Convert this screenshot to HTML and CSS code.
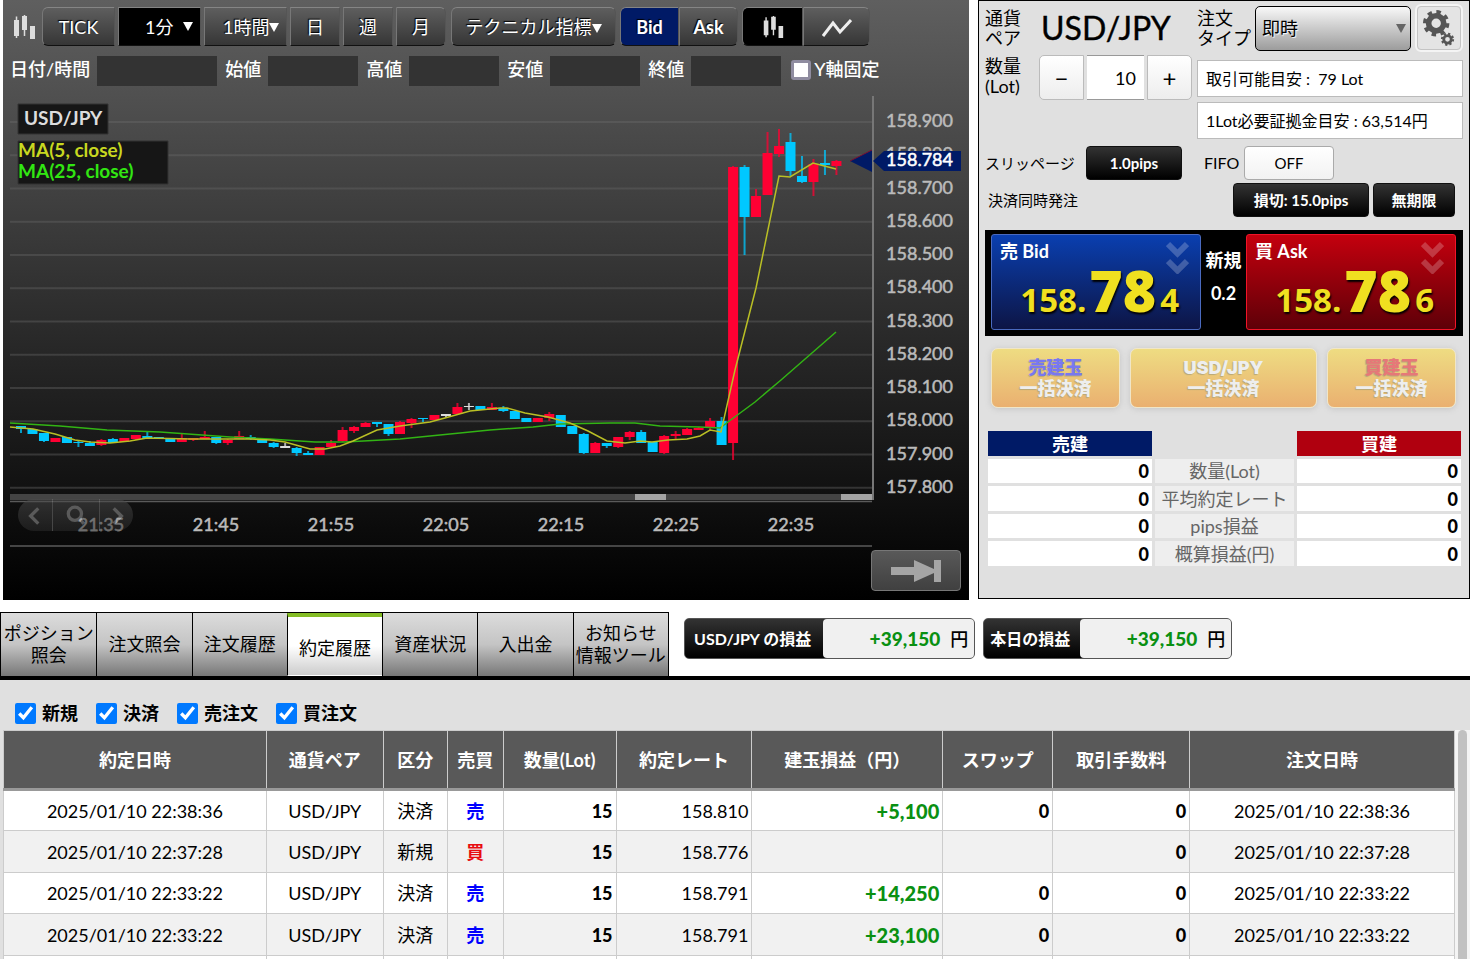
FILE: index.html
```html
<!DOCTYPE html>
<html lang="ja">
<head>
<meta charset="utf-8">
<title>USD/JPY</title>
<link rel="stylesheet" href="styles.css">
</head>
<body>
<svg class="defs" aria-hidden="true">
  <symbol id="candles" viewBox="0 0 22 26">
    <path d="M3.500 2.500V24M11.500 1V22" stroke="currentColor" stroke-width="1.500"/>
    <path d="M1 6h5v16H1zM9 2h5v14H9zM17 12h5v13h-5z" fill="currentColor"/>
  </symbol>
  <symbol id="down" viewBox="0 0 10 9"><path d="M0 0H10L5 9z" fill="currentColor"/></symbol>
  <symbol id="chevrons" viewBox="0 0 23 33">
    <path d="M2 3 11.500 12.500 21 3M2 20 11.500 29.500 21 20" fill="none" stroke="currentColor" stroke-width="6"/>
  </symbol>
</svg>

<main class="workspace">
  <section class="chart-panel">
    <div class="toolbar">
      <svg class="candle-icon"><use href="#candles"/></svg>
      <button class="tool first tick">TICK</button>
      <span class="picker minutes on"><select class="tool square" aria-label="分足"><option>1分</option></select><svg><use href="#down"/></svg></span>
      <span class="picker hours"><select class="tool square" aria-label="時間足"><option>1時間</option></select><svg><use href="#down"/></svg></span>
      <button class="tool square day">日</button>
      <button class="tool square day">週</button>
      <button class="tool last day">月</button>
      <button class="tool indicators">テクニカル指標<svg><use href="#down"/></svg></button>
      <div class="pair price-side"><button class="tool first bid-on">Bid</button><button class="tool last">Ask</button></div>
      <div class="pair chart-type">
        <button class="tool first black" aria-label="ローソク足"><svg class="candle-icon"><use href="#candles"/></svg></button>
        <button class="tool last" aria-label="ライン"><svg class="line-icon" viewBox="0 0 30 20"><path d="M1 18 11 5 18 14 29 2" fill="none" stroke="currentColor" stroke-width="3"/></svg></button>
      </div>
    </div>
    <div class="ohlc">
      <label for="dt">日付/時間</label><input id="dt" class="date-box" readonly>
      <label for="op">始値</label><input id="op" readonly>
      <label for="hi">高値</label><input id="hi" readonly>
      <label for="lo">安値</label><input id="lo" readonly>
      <label for="cl">終値</label><input id="cl" readonly>
      <label class="fix"><input type="checkbox" class="fix-box">Y軸固定</label>
    </div>
    <div class="chart">
      <svg class="plot" id="plot" viewBox="3 90 966 510" role="img" aria-label="USD/JPY 1分足">
        <g id="grid"></g>
        <path d="M873 96V500" class="axis"/>
        <path d="M10 497H872" stroke="#444" stroke-width="6"/>
        <path d="M635 497H666M841 497H872" stroke="#a3a3a3" stroke-width="6"/>
        <path d="M10 501.500H872M10 546H872" stroke="#5a5a5a" stroke-width="1.500"/>
        <g id="candle-layer"></g>
        <polyline class="ma25" points="10,423 60,426 107,430 160,432 230,437 270,439 315,442 345,442 400,439 450,434 490,430 533,427 560,424 610,423 635,423 660,426 700,427 720,428 732,419 755,402 781,380 836,332"/>
        <polyline class="ma5" points="10,427 33,429 55,434 75,440 90,442 110,443 130,441 147,438 190,439 250,439 270,440 285,442 310,449 325,449 340,446 353,441 377,430 400,426 430,422 445,418 470,411 500,408 507,408 525,413 548,417 570,423 588,431 607,441 625,443 640,441 652,442 668,440 687,439 700,436 710,430 721,432 735,370 756,288 779,176 790,177 813,163 836,169"/>
        <g id="labels"></g>
        <path d="M850 161 872 150V172z" fill="#001a66"/>
        <path d="M850 161 872 150" stroke="#7a1030"/>
        <path d="M873 161 884 151H961V171H884z" fill="#001a66"/>
        <text x="953" y="166" class="tag">158.784</text>
        <path d="M18 104H108V134H18zM18 141H168V184H18z" fill="#161616" stroke="#333"/>
        <text x="24" y="125" class="legend" fill="#ddd">USD/JPY</text>
        <text x="18" y="157" class="legend" fill="#c8d820">MA(5, close)</text>
        <text x="18" y="178" class="legend" fill="#32e612">MA(25, close)</text>
      </svg>
      <div class="nav">
        <button aria-label="前へ"><svg viewBox="0 0 20 20"><path d="M13 3 6 10 13 17"/></svg></button>
        <button aria-label="ズーム"><svg viewBox="0 0 20 20"><circle cx="9" cy="8" r="6"/><path d="M13 12 17 17"/></svg></button>
        <button aria-label="次へ"><svg viewBox="0 0 20 20"><path d="M7 3 14 10 7 17"/></svg></button>
      </div>
      <button class="latest" aria-label="最新へ"><svg viewBox="0 0 52 22"><path d="M1 7H24V0L44 9V0H51V22H44V13L24 22V15H1z"/></svg></button>
    </div>
  </section>

  <section class="order-panel">
    <div class="order-grid">
      <div class="order-left">
        <div class="line pair-line"><span class="caption">通貨<br>ペア</span><span class="symbol">USD/JPY</span></div>
        <div class="line"><label class="caption" for="lot">数量<br>(Lot)</label>
          <div class="stepper"><button class="step minus" aria-label="減らす">−</button><input id="lot" value="10"><button class="step plus" aria-label="増やす">+</button></div></div>
      </div>
      <div class="order-right">
        <div class="line type-line"><label class="caption" for="type">注文<br>タイプ</label>
          <span class="picker type"><select id="type"><option>即時</option></select><svg><use href="#down"/></svg></span>
          <button class="gear" aria-label="設定"><svg viewBox="0 0 36 40">
            <g fill="none" stroke="#555"><circle cx="15" cy="15" r="8" stroke-width="6"/><circle cx="15" cy="15" r="12" stroke-width="4" stroke-dasharray="4.700 4.700"/>
            <circle cx="27" cy="32" r="4" stroke-width="3"/><circle cx="27" cy="32" r="6" stroke-width="2" stroke-dasharray="2.350 2.350"/></g></svg></button></div>
        <div class="info">取引可能目安 :&nbsp; 79 Lot</div>
        <div class="info">1Lot必要証拠金目安 : 63,514円</div>
      </div>
    </div>
    <div class="settings">
      <span class="small slip">スリッページ</span><button class="dark slip-btn">1.0pips</button>
      <span class="small fifo">FIFO</span><button class="light">OFF</button>
    </div>
    <div class="settings settle">
      <span class="small">決済同時発注</span><button class="dark stop">損切: 15.0pips</button><button class="dark limit">無期限</button>
    </div>
    <div class="rates">
      <button class="rate sell"><span class="side">売 Bid</span><svg><use href="#chevrons"/></svg><span class="price">158.<b>78</b><i>4</i></span></button>
      <div class="spread"><span>新規</span><span>0.2</span></div>
      <button class="rate buy"><span class="side">買 Ask</span><svg><use href="#chevrons"/></svg><span class="price">158.<b>78</b><i>6</i></span></button>
    </div>
    <div class="close-all">
      <button><span class="c-sell">売建玉</span>一括決済</button>
      <button><span class="c-pair">USD/JPY</span>一括決済</button>
      <button><span class="c-buy">買建玉</span>一括決済</button>
    </div>
    <table class="summary">
      <tr><th class="h-sell">売建</th><td class="blank"></td><th class="h-buy">買建</th></tr>
      <tr><td>0</td><th>数量(Lot)</th><td>0</td></tr>
      <tr><td>0</td><th>平均約定レート</th><td>0</td></tr>
      <tr><td>0</td><th>pips損益</th><td>0</td></tr>
      <tr><td>0</td><th>概算損益(円)</th><td>0</td></tr>
    </table>
  </section>
</main>

<div class="tabbar">
  <nav class="tabs">
    <button>ポジション<br>照会</button><button>注文照会</button><button>注文履歴</button><button class="current">約定履歴</button><button>資産状況</button><button>入出金</button><button>お知らせ<br>情報ツール</button>
  </nav>
  <div class="pl pl-pair"><span class="pl-name">USD/JPY の損益</span><span class="pl-value"><b>+39,150</b>円</span></div>
  <div class="pl"><span class="pl-name">本日の損益</span><span class="pl-value"><b>+39,150</b>円</span></div>
</div>

<section class="history">
  <div class="filters">
    <label><input type="checkbox" checked>新規</label><label><input type="checkbox" checked>決済</label><label><input type="checkbox" checked>売注文</label><label><input type="checkbox" checked>買注文</label>
  </div>
  <div class="history-body">
    <table class="trades">
      <colgroup><col class="w-date"><col class="w-pair"><col class="w-kind"><col class="w-side"><col class="w-lot"><col class="w-rate"><col class="w-pl"><col class="w-swap"><col class="w-fee"><col class="w-order"></colgroup>
      <thead><tr><th>約定日時</th><th>通貨ペア</th><th>区分</th><th>売買</th><th>数量(Lot)</th><th>約定レート</th><th>建玉損益（円）</th><th>スワップ</th><th>取引手数料</th><th>注文日時</th></tr></thead>
      <tbody>
        <tr><td>2025/01/10 22:38:36</td><td>USD/JPY</td><td>決済</td><td class="s">売</td><td class="n">15</td><td class="r">158.810</td><td class="g">+5,100</td><td class="n">0</td><td class="n">0</td><td>2025/01/10 22:38:36</td></tr>
        <tr><td>2025/01/10 22:37:28</td><td>USD/JPY</td><td>新規</td><td class="b">買</td><td class="n">15</td><td class="r">158.776</td><td></td><td></td><td class="n">0</td><td>2025/01/10 22:37:28</td></tr>
        <tr><td>2025/01/10 22:33:22</td><td>USD/JPY</td><td>決済</td><td class="s">売</td><td class="n">15</td><td class="r">158.791</td><td class="g">+14,250</td><td class="n">0</td><td class="n">0</td><td>2025/01/10 22:33:22</td></tr>
        <tr><td>2025/01/10 22:33:22</td><td>USD/JPY</td><td>決済</td><td class="s">売</td><td class="n">15</td><td class="r">158.791</td><td class="g">+23,100</td><td class="n">0</td><td class="n">0</td><td>2025/01/10 22:33:22</td></tr>
        <tr><td></td><td></td><td></td><td></td><td></td><td></td><td></td><td></td><td></td><td></td></tr>
      </tbody>
    </table>
    <div class="track"><div class="thumb"></div></div>
  </div>
</section>
<script src="chart.js"></script>
</body>
</html>
```
FILE: styles.css
```css
* { box-sizing: border-box; }
body {
  margin: 0; height: 100vh; display: flex; flex-direction: column; overflow: hidden;
  background: #fff; color: #000;
  font: 18px/20px Lato, "Noto Sans CJK JP", sans-serif;
}
button, input, select { font: inherit; color: inherit; margin: 0; padding: 0; }
button { white-space: nowrap; }
.defs { position: absolute; width: 0; height: 0; }

.workspace { display: grid; grid-template-columns: 966fr 492fr; gap: 9px; padding: 0 0 0 3px; flex: none; }

/* chart */
.chart-panel { background: linear-gradient(#5f5f5f, #2f2f2f 50%, #000); color: #fff; min-width: 0; }
.toolbar { display: flex; align-items: center; height: 53px; padding: 0 0 0 10px; gap: 3px; }
.candle-icon { width: 22px; height: 26px; color: #ddd; }
.toolbar > .candle-icon { margin-right: 4px; }
.tool {
  height: 39px; border: 1px solid #777; border-color: #858585 #555 #111 #777;
  background: linear-gradient(#5e5e5e, #363636); color: #fff; text-shadow: -1px -1px 1px #000;
}
.first { border-radius: 6px 0 0 6px; }
.last { border-radius: 0 6px 6px 0; }
.square { border-radius: 0; }
.tick { width: 73px; }
.day { width: 50px; }
.picker { position: relative; display: inline-flex; }
.picker select { appearance: none; width: 100%; text-align: left; }
.picker svg { position: absolute; width: 10px; height: 9px; pointer-events: none; }
.minutes, .hours { width: 83px; }
.minutes select { padding-left: 26px; background: #000; }
.hours select { padding-left: 18px; }
.minutes svg { right: 8px; top: 15px; }
.hours svg { right: 8px; top: 16px; }
.indicators { width: 165px; border-radius: 6px; margin-left: 2px; }
.indicators svg { width: 10px; height: 9px; vertical-align: 1px; }
.pair { display: flex; margin-left: 1px; }
.price-side .tool { width: 59px; font-weight: 700; }
.price-side .tool.bid-on { background: #001a66; }
.chart-type .tool { width: 67px; }
.chart-type .tool.black { width: 61px; background: #000; }
.chart-type .candle-icon { width: 22px; height: 24px; vertical-align: middle; }
.line-icon { width: 30px; height: 20px; vertical-align: middle; color: #eee; }
.ohlc { display: flex; align-items: center; height: 37px; padding: 0 0 6px 7px; gap: 7px; font-weight: 500; white-space: nowrap; }
.ohlc input { width: 90px; height: 30px; border: 0; background: #333; margin: 4px 1px 0 0; flex: none; }
.ohlc .date-box { width: 120px; }
.ohlc .fix { display: flex; gap: 3px; margin-left: 2px; align-items: center; }
.ohlc .fix-box { appearance: none; width: 20px; height: 20px; margin: 2px 0 0; border: 3px solid #8f8ca0; border-radius: 3px; background: #fff; }
.chart { position: relative; }
.plot { display: block; width: 100%; height: auto; }
.plot text { font-size: 18px; }
.axis { stroke: #777; stroke-width: 2; }
.ma5, .ma25 { fill: none; stroke-width: 1.5; stroke: #b9bf25; }
.ma25 { stroke: #32b414; }
.scale { fill: #bbb; stroke: #bbb; stroke-width: 0.5px; }
.tag { fill: #fff; stroke: #fff; stroke-width: 0.5px; text-anchor: end; }
.plot .legend { font-size: 19px; font-weight: 700; }
.nav { position: absolute; left: 15px; bottom: 69px; display: flex; border-radius: 16px; overflow: hidden; opacity: 0.55; }
.nav button { width: 34px; height: 32px; border: 0; background: linear-gradient(#4c4c4c, #2c2c2c); }
.nav button + button { width: 47px; border-left: 1px solid #777; }
.nav button:last-child { width: 34px; }
.nav svg { width: 22px; height: 22px; fill: none; stroke: #999; stroke-width: 3; vertical-align: middle; }
.latest { position: absolute; right: 8px; bottom: 9px; width: 90px; height: 41px; border: 1px solid #777; border-radius: 4px; background: linear-gradient(#595959, #404040); }
.latest svg { width: 52px; height: 22px; fill: #a5a5a5; vertical-align: middle; }

/* order entry */
.order-panel { border: 1px solid #000; background: #e0e0e0; padding: 3px 6px 0 6px; min-width: 0; margin-bottom: 1px; }
.order-grid { display: grid; grid-template-columns: 212fr 266fr; }
.line { display: flex; align-items: center; }
.caption { line-height: 20px; width: 54px; white-space: nowrap; }
.pair-line { height: 48px; }
.symbol { font-size: 32px; line-height: 48px; padding-left: 2px; -webkit-text-stroke: 0.4px #000; }
.stepper { display: flex; gap: 3px; margin-top: 3px; }
.step { width: 45px; height: 45px; border: 1px solid #bbb; background: linear-gradient(#fff, #ededed); font-size: 24px; }
.minus { border-radius: 5px 0 0 5px; }
.plus { border-radius: 0 5px 5px 0; }
.stepper input { width: 57px; border: solid #999; border-width: 1px 0; background: #fff; text-align: right; padding-right: 8px; }
.type-line { height: 48px; gap: 4px; margin-bottom: 8px; }
.picker.type { flex: 1; }
.type select { height: 45px; padding-left: 6px; border: 1px solid #000; border-radius: 5px; background: linear-gradient(#f8f8f8, #9c9c9c); text-shadow: 1px 1px 1px #fff; }
.type svg { right: 5px; top: 18px; color: #666; }
.gear { width: 48px; height: 48px; border: 2px solid #f4f4f4; outline: 1px solid #c4c4c4; outline-offset: -3px; border-radius: 6px; background: #e4e4e4; }
.gear svg { width: 34px; height: 38px; vertical-align: middle; }
.info { height: 37px; border: 1px solid #bbb; background: #fff; margin-bottom: 5px; padding: 0 8px; font-size: 16px; line-height: 36px; white-space: nowrap; }
.settings { display: flex; align-items: center; height: 38px; white-space: nowrap; }
.small { font-size: 15px; }
.slip { width: 101px; }
.fifo { width: 40px; font-size: 16px; margin-left: 22px; }
.dark, .light { height: 34px; border-radius: 4px; font-size: 15px; border: 1px solid #111; }
.dark { background: linear-gradient(#333, #000); color: #fff; font-weight: 700; }
.light { width: 90px; border-color: #aaa; background: linear-gradient(#fff, #f2f2f2); }
.slip-btn { width: 96px; }
.settle { height: 36px; padding: 0 8px 0 3px; }
.stop { width: 136px; margin: 0 4px 0 auto; }
.limit { width: 82px; }
.rates { display: grid; grid-template-columns: 1fr 45px 1fr; background: #000; margin-top: 12px; padding: 4px 7px 6px 6px; }
.rate { position: relative; height: 96px; border: 1px solid #4a6abf; border-radius: 3px; background: linear-gradient(#0a3fb0, #0d1545); color: #fff; text-align: left; }
.rate.buy { border-color: #f01428; background: linear-gradient(#c4000e, #5e0008); }
.side { position: absolute; left: 8px; top: 6px; font-weight: 700; }
.rate svg { position: absolute; right: 11px; top: 6px; width: 23px; height: 33px; color: #fff; opacity: 0.22; }
.price { position: absolute; right: 21px; bottom: 9px; font: 700 33px/40px "Open Sans", sans-serif; color: #f0e020; text-shadow: 1px 2px 2px #000; }
.price b { font-size: 57px; margin: 0 4px 0 3px; }
.price i { font-style: normal; }
.spread { color: #fff; font-weight: 700; display: flex; flex-direction: column; align-items: center; padding-top: 16px; gap: 13px; }
.close-all { display: grid; grid-template-columns: 129fr 187fr 129fr; gap: 10px; padding: 12px 7px 0 6px; }
.close-all button { height: 60px; border: 1px solid #f0e6c8; border-radius: 7px; background: linear-gradient(#eedc82, #eab070); box-shadow: 0 1px 6px #c4c4c4; color: #eee; font-weight: 900; line-height: 21px; text-shadow: -1px 1px 1px #b8a878; }
.close-all span { display: block; }
.c-sell { color: #7878f0; }
.c-buy { color: #e67878; }
.c-pair { font-family: Inter, sans-serif; }
.summary { width: 100%; margin-top: 20px; table-layout: fixed; border-spacing: 3px; }
.summary th, .summary td { height: 24px; padding: 0 3px; line-height: 24px; background: #fff; text-align: right; font-weight: 900; }
.summary tr:nth-child(odd) > * { height: 25px; }
.summary th { width: 164px; background: #eee; color: #666; text-align: center; font-weight: 400; white-space: nowrap; }
.summary .h-sell { background: #001a66; color: #fff; font-weight: 700; }
.summary .h-buy { background: #b0000f; color: #fff; font-weight: 700; }
.summary .blank { background: none; width: 139px; }

/* tabs */
.tabbar { display: flex; align-items: flex-start; margin-top: 12px; border-bottom: 4px solid #000; flex: none; height: 68px; }
.tabs { display: grid; grid-template-columns: repeat(7, 1fr); width: 669px; border: solid #000; border-width: 1px 1px 0; }
.tabs button { height: 63px; border: 0; background: linear-gradient(#dcdcdc, #c4c4c4 50%, #777); line-height: 22px; padding-bottom: 2px; }
.tabs button + button { border-left: 1px solid #000; }
.tabs .current { background: linear-gradient(#fff 50%, #ccc); border-top: 4px solid #84bc24; border-bottom: 1px solid #fff; padding: 4px 0 0; }
.pl { display: flex; margin: 6px 0 0 8px; height: 41px; border: 1px solid #555; border-radius: 5px; background: linear-gradient(#333, #000); line-height: 39px; white-space: nowrap; }
.pl-pair { margin-left: 15px; }
.pl-name { color: #fff; font-size: 16px; font-weight: 700; padding: 0 10px 0 6px; }
.pl-pair .pl-name { padding: 0 12px 0 9px; }
.pl-value { background: #f0f0f0; border-radius: 4px; width: 151px; text-align: right; padding-right: 6px; font-weight: 500; }
.pl-value b { color: #0a9012; font-size: 19px; font-weight: 900; margin-right: 10px; }

/* history */
.history { flex: 1; min-height: 0; overflow: hidden; background: #e0e0e0; }
.filters { display: flex; gap: 18px; height: 50px; padding: 16px 0 0 15px; font-weight: 600; }
.filters label { display: flex; align-items: center; height: 34px; gap: 6px; }
.filters input { width: 21px; height: 21px; accent-color: #0079ff; }
.history-body { display: flex; padding-left: 3px; }
.trades { flex: 1; table-layout: fixed; border-collapse: collapse; background: #fff; }
.w-date { width: 263px; } .w-pair { width: 117px; } .w-kind { width: 64px; } .w-side { width: 56px; } .w-lot { width: 113px; }
.w-rate { width: 136px; } .w-pl { width: 191px; } .w-swap { width: 110px; } .w-fee { width: 137px; } .w-order { width: 265px; }
.trades th { height: 59px; background: #595959; color: #fff; border: 1px solid #ccc; border-bottom: 3px solid #999; padding: 0; font-weight: 700; white-space: nowrap; }
.trades td { height: 41px; border: 1px solid #ccc; padding: 0 3px; text-align: center; white-space: nowrap; }
.trades tr:nth-child(even) td { height: 42px; background: #f1f1f1; }
.trades .r { text-align: right; }
.trades .n { text-align: right; font-weight: 900; }
.trades .g { text-align: right; font-weight: 900; color: #0a9012; font-size: 20px; }
.trades .s { color: #00f; font-weight: 700; }
.trades .b { color: #e80c10; font-weight: 700; }
.track { width: 15px; background: #f4f4f4; padding: 0 3px; }
.thumb { height: 100%; border-radius: 5px 5px 0 0; background: #c1c1c1; }
```
FILE: chart.js
```js
// colour, body top, body bottom, wick top, wick bottom
const UP = '#ff0033', DOWN = '#00c8ff', FLAT = '#ddd';
const candles = [
  [DOWN,426,429,426,433],[DOWN,429,434,429,434],[DOWN,433,441,433,442],[UP,438,442,438,442],[DOWN,437,443,437,443],
  [DOWN,442,443,440,447],[DOWN,443,446,441,446],[UP,440,445,439,446],[DOWN,439,443,438,443],[UP,438,442,438,442],
  [UP,435,439,435,440],[DOWN,436,439,432,439],[DOWN,437,438,437,438],[DOWN,439,442,439,442],[UP,438,442,434,442],
  [UP,438,440,438,441],[UP,437,439,431,439],[DOWN,437,443,437,444],[UP,440,443,439,445],[UP,436,439,431,439],
  [DOWN,437,439,435,440],[DOWN,439,443,439,443],[DOWN,443,447,442,448],[FLAT,446,448,443,448],[DOWN,448,453,447,456],
  [DOWN,453,455,451,455],[UP,447,455,447,455],[UP,443,447,440,447],[UP,430,441,427,442],[UP,427,431,426,433],
  [UP,423,427,422,427],[DOWN,422,424,422,427],[DOWN,424,434,424,436],[UP,422,434,421,434],[UP,419,423,418,428],
  [DOWN,418,419,418,422],[UP,415,420,415,420],[FLAT,414,416,414,418],[UP,407,414,403,414],[FLAT,406,407,403,410],
  [DOWN,406,410,406,410],[UP,407,410,403,410],[DOWN,408,411,406,412],[DOWN,411,419,411,419],[DOWN,418,422,418,422],
  [UP,418,422,418,422],[UP,414,418,412,421],[DOWN,415,427,415,427],[DOWN,426,434,426,434],[DOWN,434,453,433,454],
  [UP,443,453,442,453],[DOWN,443,446,443,448],[UP,437,447,437,448],[UP,432,437,431,440],[DOWN,432,443,430,443],
  [DOWN,442,452,442,452],[UP,436,453,435,454],[UP,434,436,431,439],[UP,429,435,428,435],[UP,428,430,427,430],
  [UP,421,427,418,430],[DOWN,421,445,417,445],[UP,167,443,166,460],[DOWN,167,217,165,255],[UP,196,217,189,217],
  [UP,153,195,132,195],[UP,146,154,129,157],[DOWN,142,171,133,176],[DOWN,176,182,156,183],[UP,164,182,159,196],
  [DOWN,163,165,150,175],[UP,161,166,160,175]
];
const NS = 'http://www.w3.org/2000/svg';
function add(layer, tag, attrs, text) {
  const el = document.createElementNS(NS, tag);
  for (const k in attrs) el.setAttribute(k, attrs[k]);
  if (text) el.textContent = text;
  document.getElementById(layer).appendChild(el);
}
candles.forEach(([c, top, bottom, high, low], i) => {
  const x = 21 + i * 11.485;
  add('candle-layer', 'rect', { x: x - 1, y: high, width: 2, height: low - high, fill: c, opacity: 0.75 });
  add('candle-layer', 'rect', { x: x - 5, y: top, width: 10, height: bottom - top, fill: c });
});
for (let i = 0; i < 12; i++) {
  const y = 122 + i * 33.25;
  add('grid', 'path', { d: `M10 ${y}H872`, stroke: '#fff', 'stroke-opacity': 0.07 + i * 0.007, 'stroke-width': 2 });
  add('labels', 'text', { x: 953, y: y + 5, class: 'scale', 'text-anchor': 'end' }, (158.9 - i * 0.1).toFixed(3));
}
['21:35', '21:45', '21:55', '22:05', '22:15', '22:25', '22:35'].forEach((t, i) => {
  add('labels', 'text', { x: 101 + i * 115, y: 531, class: 'scale', 'text-anchor': 'middle' }, t);
});
```
